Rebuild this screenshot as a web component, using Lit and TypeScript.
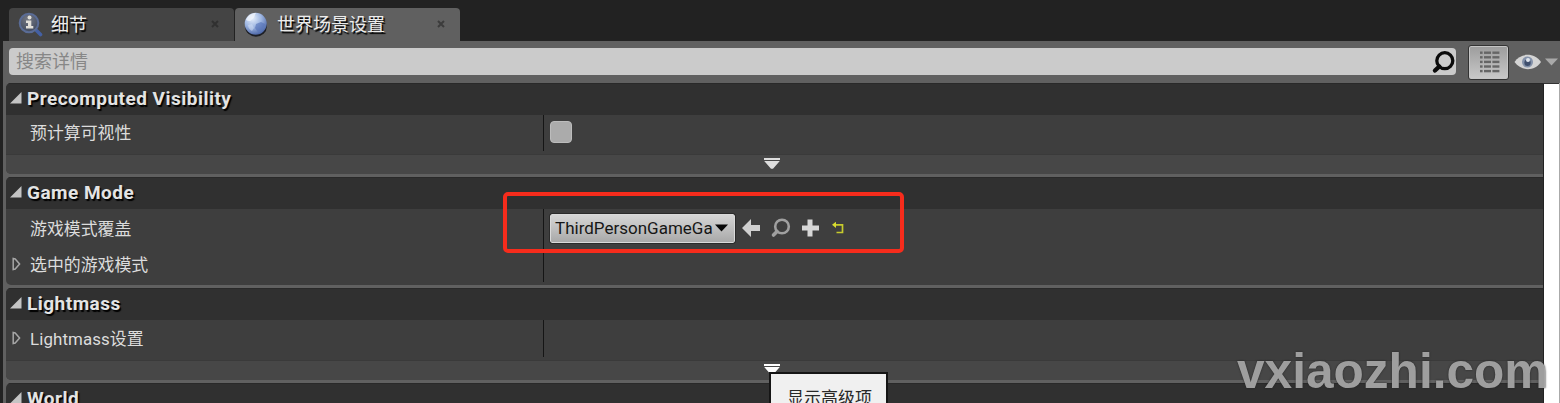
import { LitElement, html, css, svg } from "lit";
import { customElement } from "lit/decorators.js";

const closeIcon = html`<svg class="close" width="8" height="8" viewBox="0 0 8 8"><path d="M1 1L7 7M7 1L1 7" stroke="currentColor" stroke-width="2"/></svg>`;

const detailsIcon = html`<svg class="tabicon" width="26" height="26" viewBox="0 0 26 26">
  <defs><radialGradient id="lens" cx=".45" cy=".3" r=".7"><stop offset="0" stop-color="#757984"/><stop offset="1" stop-color="#414a5e"/></radialGradient></defs>
  <path d="M17.5 17.5L23.500 23.500" stroke="#4460a4" stroke-width="3.6" stroke-linecap="round"/>
  <circle cx="12" cy="12" r="9.3" fill="url(#lens)" stroke="#5a6c96" stroke-width="2"/>
  <circle cx="12.5" cy="6.500" r="2" fill="#e2e0da"/>
  <path d="M9 9.500H14.300V15H16.300V17.500H9V15H11V12H9Z" fill="#e2e0da"/>
</svg>`;

const globeIcon = html`<svg class="tabicon" width="26" height="26" viewBox="0 0 26 26">
  <defs><radialGradient id="ball" cx=".35" cy=".25" r=".8"><stop offset="0" stop-color="#e6effb"/><stop offset=".5" stop-color="#9fb7e2"/><stop offset="1" stop-color="#4762a4"/></radialGradient></defs>
  <ellipse cx="13" cy="16" rx="10.8" ry="9.7" fill="#16181f" opacity=".9"/>
  <circle cx="12.700" cy="12.700" r="11" fill="url(#ball)"/>
  <path d="M3 9C5 4 9 2 13 2C11 5 12 7 9 8C8 11 5 10 3 9Z" fill="#f1f6fc" opacity=".75"/>
  <path d="M13 13L18 11L22 13C21 18 18 20 15 21L12 17Z" fill="#5673b8" opacity=".65"/>
  <path d="M5 14L9 13L11 17L9 20C7 19 5 17 5 14Z" fill="#d5e2f5" opacity=".5"/>
</svg>`;

const searchIcon = html`<svg width="24" height="24" viewBox="0 0 24 24"><circle cx="13.8" cy="10.700" r="8" fill="none" stroke="#0b0b0b" stroke-width="3.3"/><path d="M8.300 16.500L4 20.500" stroke="#0b0b0b" stroke-width="4.4" stroke-linecap="round"/></svg>`;

const gridIcon = html`<svg width="22" height="22" viewBox="0 0 22 22" fill="#666">${[0, 1, 2, 3, 4].map(
  (i) => svg`<rect x="2" y=${0.5 + i * 4.6} width="2.6" height="2.4"/><rect x="6" y=${0.5 + i * 4.6} width="7" height="2.4"/><rect x="14.4" y=${0.5 + i * 4.6} width="7" height="2.4"/>`
)}</svg>`;

const eyeIcon = html`<svg width="46" height="20" viewBox="0 0 46 20">
  <path d="M0.500 10C6 1 20 0 27 10C20 20 7 19 0.500 10Z" fill="#d4d4d4"/>
  <circle cx="13.500" cy="10" r="5.500" fill="#8492aa"/><circle cx="13.500" cy="10.800" r="3.200" fill="#40506e"/><circle cx="14" cy="8" r="2" fill="#dfe5ee"/>
  <path d="M31 6.500H44L37.500 13.500Z" fill="#a9a9a9"/>
</svg>`;

const openArrow = html`<svg class="open" width="12" height="12" viewBox="0 0 12 12"><path d="M11.500 0V11.500H0Z" fill="#c4c4c4"/></svg>`;
const closedArrow = html`<svg class="closed" width="10" height="14" viewBox="0 0 10 14"><path d="M2.200 1.500V12.500L4.200 12L8.600 7L4.200 2Z" fill="none" stroke="#a6a6a6" stroke-width="1.5"/></svg>`;
const advIcon = (color: string) => html`<svg width="18" height="12" viewBox="0 0 18 12"><path d="M1 0H17V2H1Z M1.200 3H16.800L10 10.800H8Z" fill=${color}/></svg>`;

@customElement("app-root")
export class AppRoot extends LitElement {
  static styles = css`
    :host { display: block; position: relative; width: 1560px; height: 403px; overflow: hidden; background: #222; font-family: Roboto, "Noto Sans CJK SC", sans-serif; color: #dcdcdc; }
    * { box-sizing: border-box; }
    svg { display: block; flex: none; }
    .tabs { height: 41px; padding: 8px 0 0 9px; display: flex; gap: 1px; }
    .tab { width: 225px; height: 33px; display: flex; align-items: center; padding: 0 15px 0 8px; border-radius: 4px 4px 0 0; background: #444; color: #ececec; font-size: 18px; line-height: 32px; text-shadow: 1.5px 2px 1px #000; }
    .tab.active { background: #606060; }
    .tabicon { margin: 0 8px 2px 0; }
    .name { flex: 1; white-space: nowrap; }
    .close { color: #303030; margin-bottom: 1px; }
    .active .close { color: #3c3c3c; }
    .panel { margin-left: 3px; height: 362px; background: #606060; }
    .tools { height: 42px; padding-left: 6px; display: flex; align-items: center; }
    .search { width: 1447px; height: 27px; margin-bottom: 1px; border-radius: 4px; background: #cbcbcb; display: flex; align-items: center; justify-content: space-between; padding: 0 1px 0 7px; color: #878787; font-size: 18px; line-height: 26px; }
    .view { width: 41px; height: 35px; margin-left: 12px; border: 1px solid #333; border-radius: 3px; background: linear-gradient(#9c9c9c, #c9c9c9); box-shadow: inset 0 0 0 1px #c5c5c5; display: flex; align-items: center; justify-content: center; }
    .eye { margin-left: 5px; }
    .content { display: flex; padding-left: 3px; height: 320px; }
    .sections { width: 1537px; display: flex; flex-direction: column; gap: 3px; }
    .section { border-radius: 5px 0 0 5px; overflow: hidden; background: #3e3e3e; flex: none; }
    .head { height: 32px; background: #303030; display: flex; align-items: center; padding: 0 0 2px 4px; gap: 5px; font-weight: 700; font-size: 19px; line-height: 29px; letter-spacing: .48px; color: #e4e4e4; text-shadow: 1.5px 2px 1px #000; border-top: 1px solid #292929; }
    .open { margin-bottom: 2px; }
    .row { height: 36px; display: flex; }
    .tall { height: 39px; }
    .taller { height: 40px; }
    .last { height: 37px; }
    .label { width: 538px; display: flex; align-items: center; padding: 0 0 3px 5px; font-size: 16.9px; border-right: 1px solid #151515; margin-bottom: 3px; white-space: nowrap; }
    .cont .label { margin-bottom: 0; }
    .text { padding-left: 9px; }
    .notri { padding-left: 19px; }
    .latin { letter-spacing: .1px; }
    .closed { margin-top: 1px; }
    .value { display: flex; align-items: center; padding-left: 6px; height: 36px; }
    .check { width: 22px; height: 22px; border-radius: 4px; background: #ababab; border: 1px solid #bcbcbc; margin-top: -2px; }
    .adv { height: 20px; background: #474747; border-top: 1px solid #3a3a3a; display: flex; justify-content: center; padding: 3px 5px 0 0; }
    .combo { width: 185px; height: 29px; margin-top: 2px; border: 1px solid #dadada; outline: 1px solid #2b2b2b; border-radius: 2px; background: linear-gradient(#d6d6d6, #a9a9a9); color: #161616; display: flex; align-items: center; font-size: 17px; letter-spacing: 0; padding: 0 6px 0 4px; justify-content: space-between; white-space: nowrap; }
    .actions { margin-left: 6px; margin-top: 1px; }
    .scroll { width: 16px; height: 320px; background: #fff; border-left: 1px solid #222; border-top: 1px solid #333; }
    .edge { width: 1px; background: #aaa; }
    .callout { position: absolute; left: 503px; top: 192px; width: 401px; height: 61px; border: 4px solid #f62c1c; border-radius: 5px; }
    .tip { position: absolute; left: 769px; top: 372px; width: 119px; height: 50px; border: 2px solid #151515; background: #f0f0f0; color: #282828; font-size: 17px; line-height: 24px; padding: 12px 0 0 16px; white-space: nowrap; }
    .mark { position: absolute; left: 1237px; top: 342px; font: bold 49.600px/58px "Liberation Sans", sans-serif; color: rgba(180, 180, 180, .85); text-shadow: 0 0 2px #222; white-space: nowrap; }
  `;

  private head(title: string) {
    return html`<div class="head">${openArrow}<span>${title}</span></div>`;
  }

  render() {
    return html`
      <div class="tabs">
        <div class="tab">${detailsIcon}<span class="name">细节</span>${closeIcon}</div>
        <div class="tab active">${globeIcon}<span class="name">世界场景设置</span>${closeIcon}</div>
      </div>
      <div class="panel">
        <div class="tools">
          <div class="search"><span>搜索详情</span>${searchIcon}</div>
          <div class="view">${gridIcon}</div>
          <div class="eye">${eyeIcon}</div>
        </div>
        <div class="content">
          <div class="sections">
            <div class="section">
              ${this.head("Precomputed Visibility")}
              <div class="row tall"><div class="label"><span class="notri">预计算可视性</span></div><div class="value"><div class="check"></div></div></div>
              <div class="adv">${advIcon("#dedede")}</div>
            </div>
            <div class="section">
              ${this.head("Game Mode")}
              <div class="row cont tall">
                <div class="label"><span class="notri">游戏模式覆盖</span></div>
                <div class="value">
                  <div class="combo"><span>ThirdPersonGameGa</span><svg width="13" height="8" viewBox="0 0 13 8"><path d="M0 .5H13L6.500 7.500Z" fill="#080808"/></svg></div>
                  <svg class="actions" width="108" height="24" viewBox="0 0 108 24">
                    <path d="M1 12L10 3V9H19V15H10V21Z" fill="#d0d0d0"/>
                    <circle cx="41" cy="10.500" r="6.800" fill="none" stroke="#a0a0a0" stroke-width="2.600"/><path d="M36 15.500L32.500 19" stroke="#a0a0a0" stroke-width="3.600" stroke-linecap="round"/>
                    <path d="M66.500 3.500H71.500V9.500H78V14.500H71.500V20.500H66.500V14.500H61V9.500H66.500Z" fill="#d6d6d6"/>
                    <path d="M93 8.800H101.500V16.500H95.500" fill="none" stroke="#c7cb2d" stroke-width="1.700"/><path d="M91 8.800L95 5.700V12Z" fill="#d8dc2f"/>
                  </svg>
                </div>
              </div>
              <div class="row last"><div class="label">${closedArrow}<span class="text">选中的游戏模式</span></div></div>
            </div>
            <div class="section">
              ${this.head("Lightmass")}
              <div class="row taller"><div class="label">${closedArrow}<span class="text latin">Lightmass设置</span></div></div>
              <div class="adv">${advIcon("#ffffff")}</div>
            </div>
            <div class="section">${this.head("World")}</div>
          </div>
          <div class="scroll"></div>
          <div class="edge"></div>
        </div>
      </div>
      <div class="callout"></div>
      <div class="tip">显示高级项</div>
      <div class="mark">vxiaozhi.com</div>
    `;
  }
}
